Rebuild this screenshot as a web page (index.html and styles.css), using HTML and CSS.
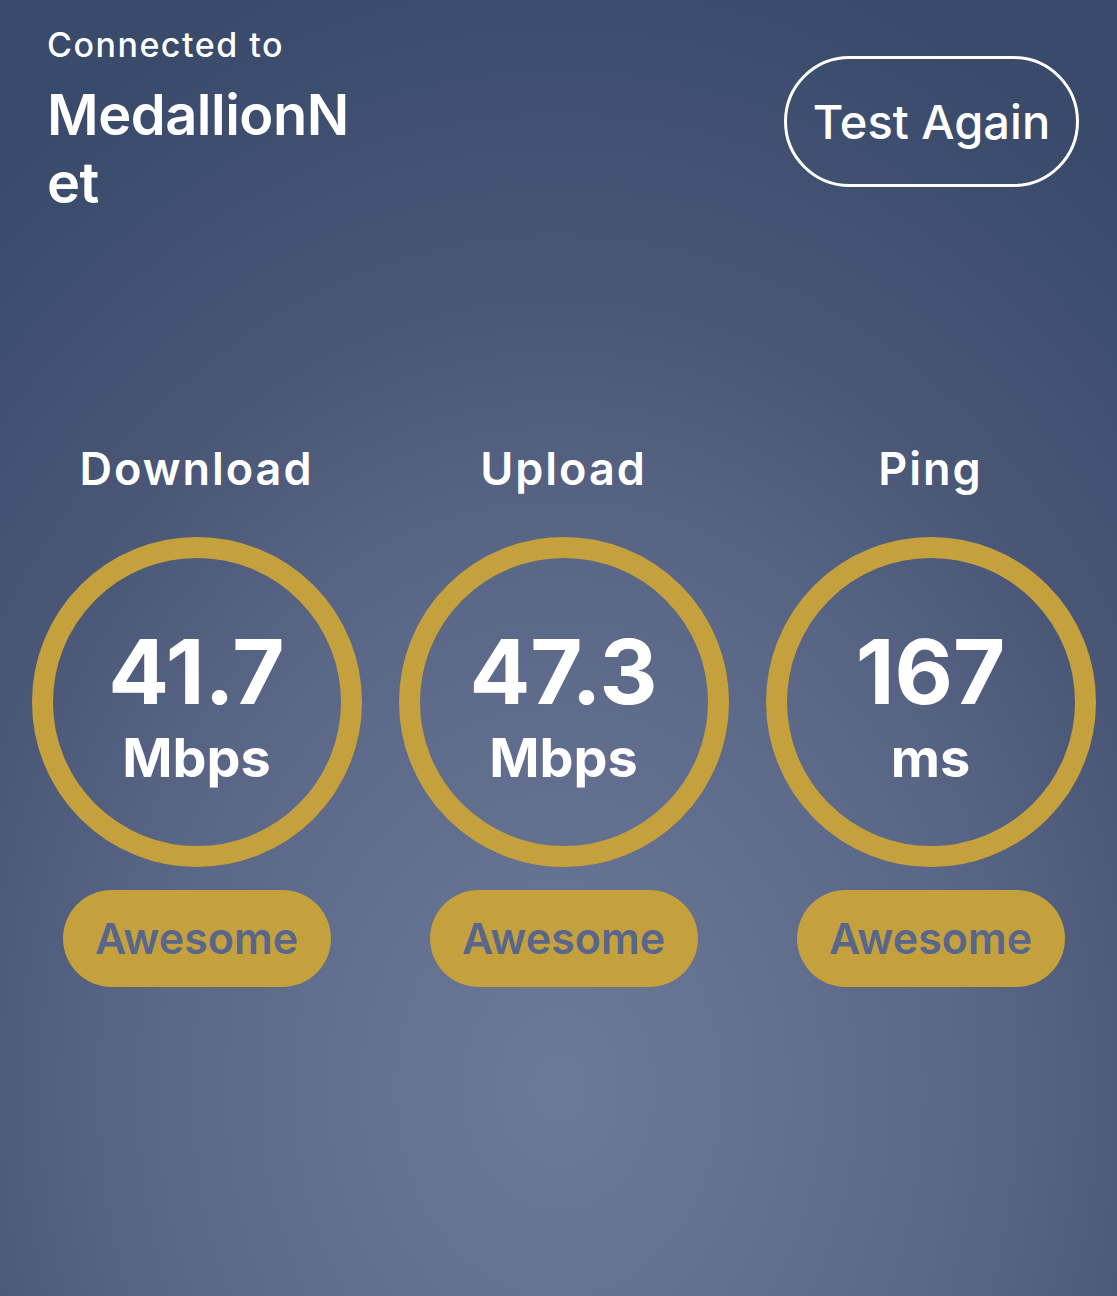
FILE: index.html
```html
<!DOCTYPE html>
<html lang="en">

<head>
  <meta charset="UTF-8" />
  <title>Speed Test</title>
  <link rel="stylesheet" href="styles.css">
</head>

<body>

  <!-- rede + botão -->
  <header class="topo">
    <div class="rede">
      <p class="rede-label">Connected to</p>
      <h1 class="rede-nome">MedallionNet</h1>
    </div>
    <button class="btn-teste">Test Again</button>
  </header>

  <!-- resultados -->
  <section class="resultados">
    <div class="medida">
      <h2 class="medida-titulo">Download</h2>
      <div class="anel">
        <span class="anel-valor">41.7</span>
        <span class="anel-unidade">Mbps</span>
      </div>
      <span class="selo">Awesome</span>
    </div>

    <div class="medida">
      <h2 class="medida-titulo">Upload</h2>
      <div class="anel">
        <span class="anel-valor">47.3</span>
        <span class="anel-unidade">Mbps</span>
      </div>
      <span class="selo">Awesome</span>
    </div>

    <div class="medida">
      <h2 class="medida-titulo">Ping</h2>
      <div class="anel">
        <span class="anel-valor">167</span>
        <span class="anel-unidade">ms</span>
      </div>
      <span class="selo">Awesome</span>
    </div>
  </section>

</body>

</html>
```

FILE: styles.css
```css
body {
  margin: 0;
  height: 1296px;
  overflow: hidden;
  font-family: Inter, 'Noto Sans', sans-serif;
  color: #ffffff;
  background: radial-gradient(ellipse 900px 1150px at 50% 84%, #6c7999 0%, #5a6787 45%, #4a5777 68%, #394a6b 100%);
}

.topo {
  display: flex;
  justify-content: space-between;
  align-items: flex-start;
  padding: 24px 38px 0 47px;
}

.rede-label {
  margin: 0;
  font-size: 34px;
  font-weight: 500;
  line-height: 41px;
  letter-spacing: 1.5px;
}

.rede-nome {
  width: 320px;
  margin: 16px 0 0;
  font-size: 56px;
  font-weight: 600;
  line-height: 68px;
  letter-spacing: -0.5px;
  word-break: break-all;
}

.btn-teste {
  width: 295px;
  height: 131px;
  margin-top: 32px;
  box-sizing: border-box;
  border: 3px solid #ffffff;
  border-radius: 66px;
  background: transparent;
  color: #ffffff;
  font-family: inherit;
  font-size: 47px;
  font-weight: 500;
  cursor: pointer;
}

.resultados {
  display: grid;
  grid-template-columns: repeat(3, 367px);
  padding-left: 13px;
  margin-top: 225px;
}

.medida {
  display: flex;
  flex-direction: column;
  align-items: center;
}

.medida-titulo {
  margin: 0 0 41px;
  font-size: 45px;
  font-weight: 600;
  line-height: 54px;
  letter-spacing: 2px;
}

.anel {
  width: 330px;
  height: 330px;
  box-sizing: border-box;
  border: 21px solid #c4a13d;
  border-radius: 50%;
  display: flex;
  flex-direction: column;
  justify-content: center;
  align-items: center;
  padding-top: 8px;
  font-weight: 700;
}

.anel-valor {
  font-size: 90px;
  line-height: 90px;
  margin-bottom: 14px;
}

.anel-unidade {
  font-size: 54px;
  line-height: 54px;
}

.selo {
  width: 268px;
  height: 97px;
  margin-top: 23px;
  border-radius: 49px;
  background: #c4a13d;
  color: #59668c;
  font-size: 43px;
  font-weight: 600;
  line-height: 97px;
  text-align: center;
}
```
